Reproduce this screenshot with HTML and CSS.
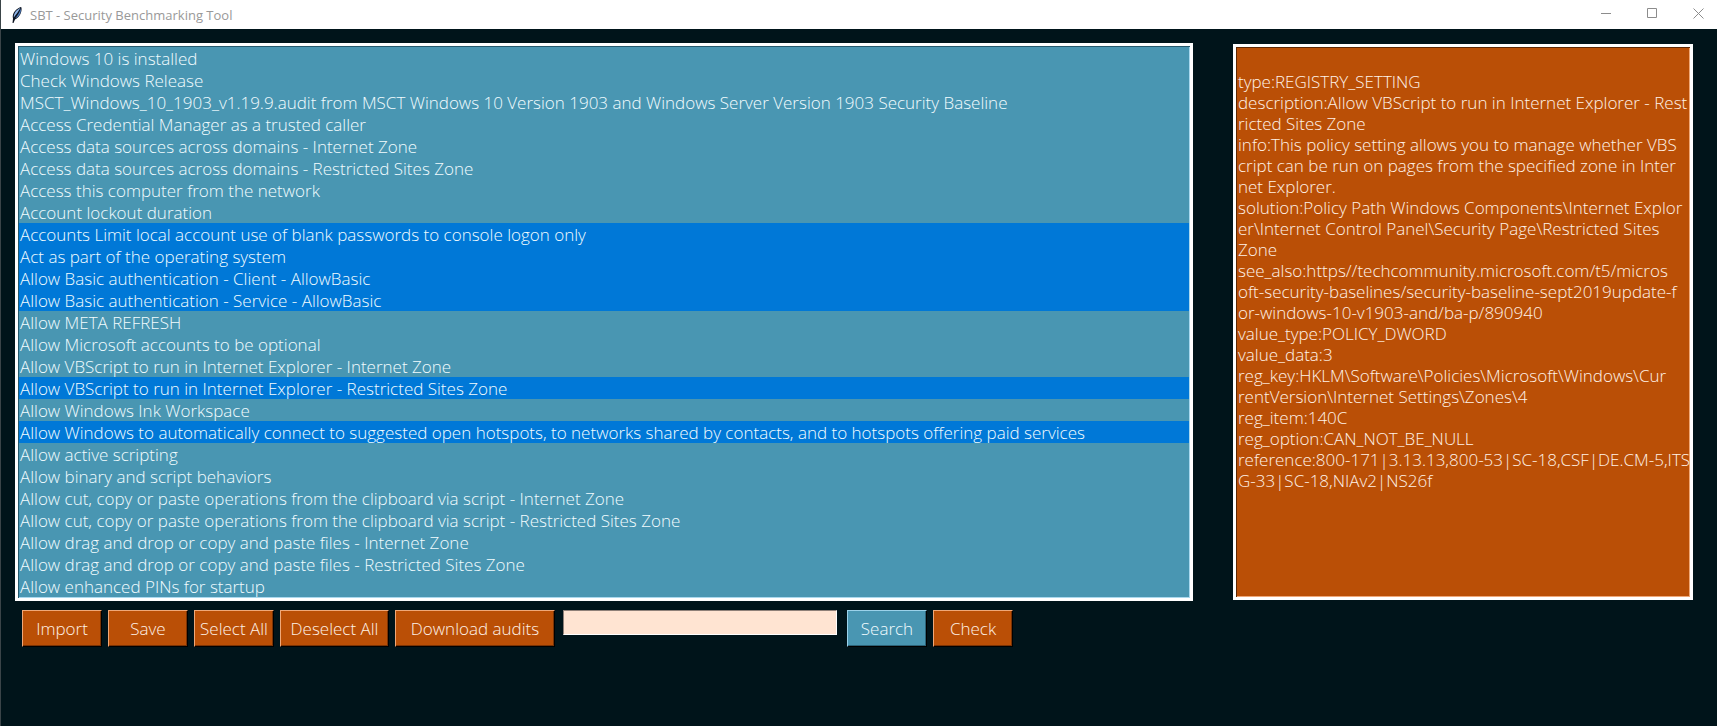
FILE: index.html
```html
<!DOCTYPE html>
<html lang="en">
<head>
<meta charset="utf-8">
<title>SBT - Security Benchmarking Tool</title>
<link rel="stylesheet" href="styles.css">
</head>
<body>
<div class="window">
  <header class="titlebar">
    <svg class="app-icon" viewBox="0 0 16 18" aria-hidden="true">
      <path d="M3.500 17 4 12.500C3 9 5 4 11.500 1L12.500 1.500C13 6 11 11 6 13.500L4.500 17Z" fill="#0b1220"/>
      <path d="M4.800 11.500C4.500 8 7 4 11.500 1.800C9.500 5.500 7.500 8 4.800 11.500Z" fill="#8fb4e6"/>
      <path d="M6 12.500C8.500 9.500 10.800 6 11.800 2.500C12.500 7 10 11 6 12.500Z" fill="#4f7dbd"/>
    </svg>
    <h1 class="title">SBT - Security Benchmarking Tool</h1>
    <div class="window-controls">
      <button class="window-button" type="button" aria-label="Minimize"><svg viewBox="0 0 11 11"><path d="M0 5.500H10"/></svg></button>
      <button class="window-button" type="button" aria-label="Maximize"><svg viewBox="0 0 11 11"><path d="M.5 .5H9.500V9.500H.5Z"/></svg></button>
      <button class="window-button" type="button" aria-label="Close"><svg viewBox="0 0 11 11"><path d="M.5 .5 10.500 10.500M10.500 .5 .5 10.500"/></svg></button>
    </div>
  </header>
  <main class="content">
    <section class="left">
      <select class="audit-list" multiple size="25" aria-label="Audit items">
        <option>Windows 10 is installed</option>
        <option>Check Windows Release</option>
        <option>MSCT_Windows_10_1903_v1.19.9.audit from MSCT Windows 10 Version 1903 and Windows Server Version 1903 Security Baseline</option>
        <option>Access Credential Manager as a trusted caller</option>
        <option>Access data sources across domains - Internet Zone</option>
        <option>Access data sources across domains - Restricted Sites Zone</option>
        <option>Access this computer from the network</option>
        <option>Account lockout duration</option>
        <option selected>Accounts Limit local account use of blank passwords to console logon only</option>
        <option selected>Act as part of the operating system</option>
        <option selected>Allow Basic authentication - Client - AllowBasic</option>
        <option selected>Allow Basic authentication - Service - AllowBasic</option>
        <option>Allow META REFRESH</option>
        <option>Allow Microsoft accounts to be optional</option>
        <option>Allow VBScript to run in Internet Explorer - Internet Zone</option>
        <option selected>Allow VBScript to run in Internet Explorer - Restricted Sites Zone</option>
        <option>Allow Windows Ink Workspace</option>
        <option selected>Allow Windows to automatically connect to suggested open hotspots, to networks shared by contacts, and to hotspots offering paid services</option>
        <option>Allow active scripting</option>
        <option>Allow binary and script behaviors</option>
        <option>Allow cut, copy or paste operations from the clipboard via script - Internet Zone</option>
        <option>Allow cut, copy or paste operations from the clipboard via script - Restricted Sites Zone</option>
        <option>Allow drag and drop or copy and paste files - Internet Zone</option>
        <option>Allow drag and drop or copy and paste files - Restricted Sites Zone</option>
        <option>Allow enhanced PINs for startup</option>
      </select>
      <div class="toolbar">
        <button class="button" type="button">Import</button>
        <button class="button" type="button">Save</button>
        <button class="button" type="button">Select All</button>
        <button class="button button-wide" type="button">Deselect All</button>
        <button class="button button-widest" type="button">Download audits</button>
        <input class="search-box" type="text" aria-label="Search text">
        <button class="button button-search" type="button">Search</button>
        <button class="button" type="button">Check</button>
      </div>
    </section>
    <textarea class="details" aria-label="Item details" spellcheck="false">

type:REGISTRY_SETTING
description:Allow VBScript to run in Internet Explorer - Rest
ricted Sites Zone
info:This policy setting allows you to manage whether VBS
cript can be run on pages from the specified zone in Inter
net Explorer.
solution:Policy Path Windows Components\Internet Explor
er\Internet Control Panel\Security Page\Restricted Sites
Zone
see_also:https//techcommunity.microsoft.com/t5/micros
oft-security-baselines/security-baseline-sept2019update-f
or-windows-10-v1903-and/ba-p/890940
value_type:POLICY_DWORD
value_data:3
reg_key:HKLM\Software\Policies\Microsoft\Windows\Cur
rentVersion\Internet Settings\Zones\4
reg_item:140C
reg_option:CAN_NOT_BE_NULL
reference:800-171|3.13.13,800-53|SC-18,CSF|DE.CM-5,ITS
G-33|SC-18,NIAv2|NS26f</textarea>
  </main>
</div>
</body>
</html>
```
FILE: styles.css
```css
* { box-sizing: border-box; }

body {
  margin: 0;
  background: #00141a;
  font-family: "Century Gothic", "Open Sans", sans-serif;
  font-size: 17px;
  font-weight: 300;
}

.window {
  display: flex;
  flex-direction: column;
  min-height: 100vh;
  border-left: 1px solid #3a4448;
}

.titlebar {
  display: flex;
  align-items: center;
  height: 29px;
  padding-left: 8px;
  background: #fff;
}

.app-icon {
  width: 16px;
  height: 18px;
  margin-right: 5px;
}

.title {
  flex: 1;
  margin: 0;
  color: #999;
  font: 400 13px/18px "Segoe UI", "Open Sans", sans-serif;
}

.window-controls {
  display: flex;
  gap: 15px;
  padding: 0 3px 2px 0;
}

.window-button {
  display: flex;
  align-items: center;
  justify-content: center;
  width: 31px;
  height: 27px;
  padding: 0;
  border: 0;
  background: none;
}

.window-button svg {
  width: 11px;
  height: 11px;
  fill: none;
  stroke: #8c8c8c;
}

.content {
  display: grid;
  grid-template-columns: minmax(0, 1fr) 460px;
  column-gap: 40px;
  align-items: start;
  padding: 14px 24px 0 14px;
}

.left {
  display: flex;
  flex-direction: column;
  gap: 9px;
}

.audit-list {
  width: 100%;
  height: 558px;
  padding: 1px;
  overflow: hidden;
  border: 3px solid #fff;
  border-radius: 0;
  outline: 0;
  box-shadow: inset 1px 1px #24586b, inset -1px -1px #a9d8ee;
  background: #4996b2;
  color: #f2fcff;
  font: inherit;
}

.audit-list option {
  height: 22px;
  min-height: 22px;
  padding: 0 1px;
  color: #f2fcff;
  font: inherit;
  line-height: 22px;
}

.audit-list option:checked {
  background: #0078d7 linear-gradient(#0078d7, #0078d7);
  color: #f2fcff;
}

.toolbar {
  display: flex;
  align-items: flex-start;
  gap: 6px;
  padding-left: 7px;
}

.button {
  width: 80px;
  height: 37px;
  padding: 0;
  border: 1px solid;
  border-color: #f0a878 #000 #000 #f0a878;
  box-shadow: inset -1px -1px #7a3304;
  background: #ba4f06;
  color: #fff2e8;
  font: inherit;
  white-space: nowrap;
}

.button-wide { width: 109px; }

.button-widest { width: 160px; }

.button-search {
  border-color: #9bd2ea #000 #000 #9bd2ea;
  box-shadow: inset -1px -1px #2c6378;
  background: #4996b2;
  color: #f2fcff;
}

.search-box {
  width: 274px;
  height: 25px;
  margin: 0 4px 0 2px;
  padding: 0 2px;
  border: 1px solid;
  border-color: #8f8078 #fff #fff #8f8078;
  background: #ffe4d2;
  color: #00141a;
  font: inherit;
}

.details {
  height: 556px;
  margin: 1px 0 0;
  padding: 3px 2px;
  overflow: hidden;
  border: 3px solid #fff;
  border-radius: 0;
  outline: 0;
  box-shadow: inset 1px 1px #5c2703, inset -1px -1px #f0a878;
  background: #ba4f06;
  color: #fff2e8;
  font: inherit;
  line-height: 21px;
  white-space: pre;
  resize: none;
}
```
